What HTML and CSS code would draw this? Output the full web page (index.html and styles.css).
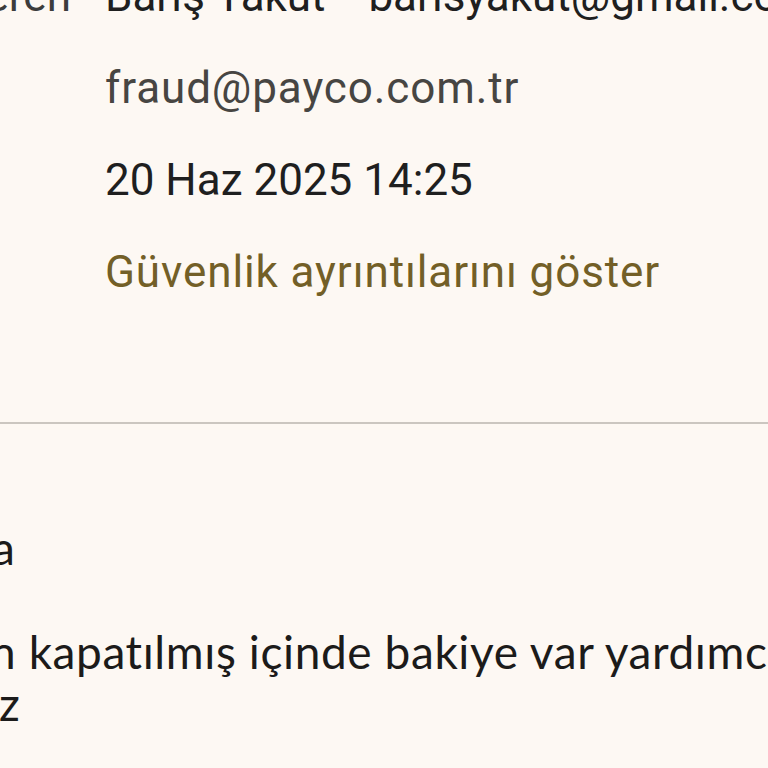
FILE: index.html
```html
<!DOCTYPE html>
<html lang="tr">
<head>
<meta charset="utf-8">
<title>E-posta ayrıntıları</title>
<link rel="stylesheet" href="styles.css">
</head>
<body>
<div class="screen">
  <div class="details">
    <div class="row">
      <div class="label">Gönderen</div>
      <div class="value"><span class="name">Barış Yakut</span><span class="sep">•</span><span>barisyakut@gmail.com</span></div>
    </div>
    <div class="row">
      <div class="label"></div>
      <div class="value muted">fraud@payco.com.tr</div>
    </div>
    <div class="row">
      <div class="label"></div>
      <div class="value">20 Haz 2025 14:25</div>
    </div>
    <div class="row">
      <div class="label"></div>
      <div class="value link">Güvenlik ayrıntılarını göster</div>
    </div>
  </div>
  <hr class="divider">
  <div class="message">
    <p class="line shift-a">a</p>
    <p class="line shift-n">n kapatılmış içinde bakiye var yardımcı</p>
    <p class="line shift-z">z</p>
  </div>
</div>
</body>
</html>
```

FILE: styles.css
```css
html, body {
  margin: 0;
  padding: 0;
  background: #fdf8f3;
}
.screen {
  width: 768px;
  height: 768px;
  overflow: hidden;
  background: #fdf8f3;
}
.details {
  margin-top: -50px;
  font-family: Roboto, "Noto Sans", sans-serif;
  font-size: 44px;
  color: #1f1f1f;
}
.row {
  display: grid;
  grid-template-columns: 105px 1fr;
  line-height: 92px;
  height: 92px;
  white-space: nowrap;
}
.label {
  display: flex;
  justify-content: flex-end;
  padding-right: 34px;
  color: #3c3c3c;
}
.value {
  display: flex;
  overflow: visible;
}
.sep {
  margin: 0 14px;
}
.muted {
  color: #474542;
  letter-spacing: 0.9px;
}
.link {
  color: #735f27;
  letter-spacing: 0.9px;
}
.divider {
  margin: 104px 0 0 0;
  border: 0;
  height: 2px;
  background: #cbc6c0;
}
.message {
  font-family: Lato, "Noto Sans", sans-serif;
  font-size: 46px;
  letter-spacing: 0.6px;
  color: #1c1b1a;
  padding-top: 98px;
}
.line {
  margin: 0;
  line-height: 52px;
  white-space: nowrap;
}
.shift-a { margin-left: -8px; margin-bottom: 52px; }
.shift-n { margin-left: -10px; }
.shift-z { margin-left: -1px; }
```
